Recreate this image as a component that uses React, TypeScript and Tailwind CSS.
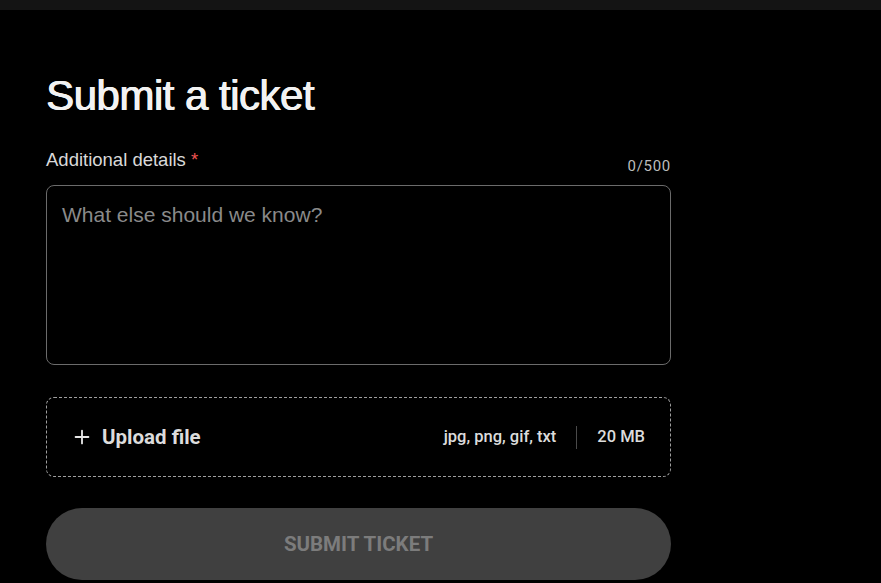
import { Plus } from "lucide-react"

export default function App() {
  return (
    <div className="min-h-screen bg-black text-white font-['Liberation_Sans',Arial,sans-serif]">
      <div className="h-[10px] bg-[#141414]" />

      <div className="pl-[46px] pt-[62px] w-[671px]">
        <h1 className="text-[42px] leading-[48px] font-normal tracking-[-0.5px] text-[#f2f2f2] [text-shadow:0.7px_0_0_#f2f2f2,-0.3px_0_0_#f2f2f2]">
          Submit a ticket
        </h1>

        <div className="mt-[29px] flex items-end justify-between">
          <label className="text-[18.5px] leading-[22px] text-[#d9d9d9]">
            Additional details <span className="text-[#ef5350]">*</span>
          </label>
          <span className="text-[15px] leading-[18px] tracking-[0.7px] text-[#bdbdbd] font-['Roboto',sans-serif] mb-[-4px]">
            0/500
          </span>
        </div>

        {/* Details textarea */}
        <textarea
          placeholder="What else should we know?"
          className="mt-[14px] block w-full h-[180px] resize-none rounded-[8px] border border-[#6b6b6b] bg-black px-[15px] py-[16px] text-[21px] leading-[26px] text-white placeholder:text-[#8a8a8a] outline-none"
        />

        {/* Upload */}
        <div className="mt-[32px] h-[80px] rounded-[8px] border border-dashed border-[#9e9e9e] flex items-center pl-[24px] pr-[25px] font-['Roboto',sans-serif]">
          <Plus size={22} strokeWidth={2} className="text-[#e6e6e6]" />
          <span className="ml-[9px] text-[20.5px] font-bold text-[#dcdcdc]">Upload file</span>
          <span className="ml-auto text-[16.5px] font-medium text-[#dcdcdc]">jpg, png, gif, txt</span>
          <div className="mx-[20px] h-[23px] w-px bg-[#4a4a4a]" />
          <span className="text-[16.5px] font-medium text-[#dcdcdc]">20 MB</span>
        </div>

        {/* Submit */}
        <button className="mt-[31px] w-full h-[72px] rounded-full bg-[#404040] text-[20.5px] font-bold text-[#7c7c7c] font-['Roboto',sans-serif]">
          SUBMIT TICKET
        </button>
      </div>
    </div>
  )
}
